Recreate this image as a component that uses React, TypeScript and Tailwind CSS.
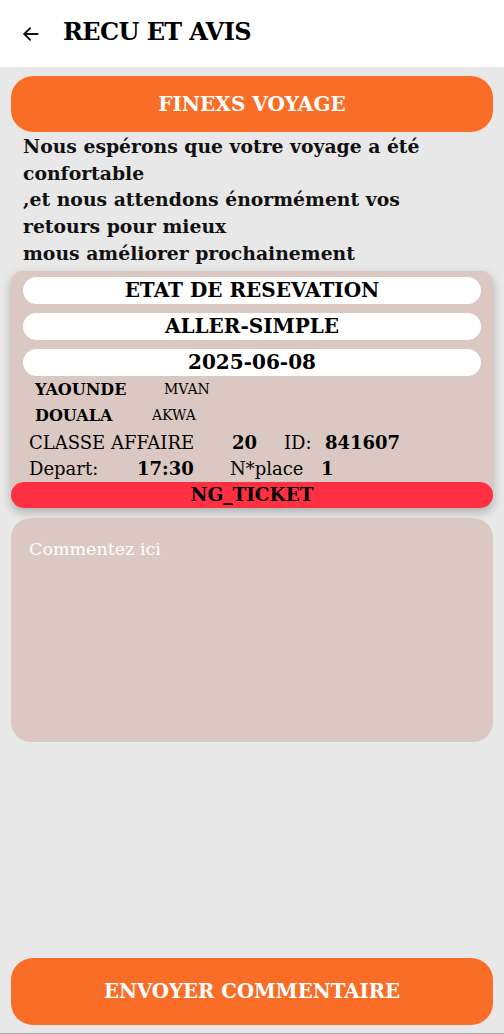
export default function App() {
  const serif = { fontFamily: '"DejaVu Serif", "Liberation Serif", serif' };
  return (
    <div className="flex h-[1034px] w-full flex-col bg-[#e8e8e8] text-black" style={serif}>
      <header className="flex h-[67px] items-center bg-white pl-[21px]">
        <svg width="20" height="20" viewBox="0 0 24 24" fill="none" stroke="#111" strokeWidth="2.2" strokeLinecap="round" strokeLinejoin="round">
          <path d="M20 12H4" />
          <path d="M11 5l-7 7 7 7" />
        </svg>
        <h1 className="mb-[3px] ml-[22px] text-[24px] font-bold tracking-[-0.6px]">RECU ET AVIS</h1>
      </header>

      <div className="flex flex-1 flex-col px-[11px] pt-[9px] pb-[8px]">
        <div className="flex h-[56px] items-center justify-center rounded-[22px] bg-[#fa6d27] text-[20px] font-bold text-white">
          FINEXS VOYAGE
        </div>

        <p className="px-[12px] pt-[1px] text-[18.8px] font-bold leading-[26.7px] text-[#111]">
          Nous espérons que votre voyage a été
          <br />
          confortable
          <br />
          ,et nous attendons énormément vos
          <br />
          retours pour mieux
          <br />
          mous améliorer prochainement
        </p>

        <div className="mt-[4px] rounded-[12px] bg-[#dcc8c2] pt-[6px] shadow-[0_4px_10px_rgba(0,0,0,0.25)]">
          <div className="flex flex-col gap-[9px] px-[12px]">
            {["ETAT DE RESEVATION", "ALLER-SIMPLE", "2025-06-08"].map((t) => (
              <div key={t} className="flex h-[27px] items-center justify-center rounded-full bg-white text-[20px] font-bold">
                {t}
              </div>
            ))}
          </div>
          <div className="px-[18px] pt-[1px]">
            <div className="flex h-[26px] items-center">
              <span className="ml-[6px] w-[129px] text-[16px] font-bold">YAOUNDE</span>
              <span className="text-[14px]">MVAN</span>
            </div>
            <div className="flex h-[26px] items-center">
              <span className="ml-[6px] w-[117px] text-[16px] font-bold">DOUALA</span>
              <span className="text-[14px]">AKWA</span>
            </div>
          </div>
          <div className="px-[18px] text-[18px]">
            <div className="flex h-[27px] items-center">
              <span className="w-[203px]">CLASSE AFFAIRE</span>
              <span className="w-[52px] font-bold">20</span>
              <span className="w-[41px]">ID:</span>
              <span className="font-bold">841607</span>
            </div>
            <div className="flex h-[26px] items-center">
              <span className="w-[108px]">Depart:</span>
              <span className="w-[93px] font-bold">17:30</span>
              <span className="w-[91px]">N*place</span>
              <span className="font-bold">1</span>
            </div>
          </div>
          <div className="flex h-[26px] items-center justify-center rounded-full bg-[#fe3042] text-[18.5px] font-bold">
            NG_TICKET
          </div>
        </div>

        <textarea
          placeholder="Commentez ici"
          className="mt-[10px] h-[224px] w-full resize-none rounded-[20px] bg-[#dcc8c2] px-[18px] py-[18px] text-[17.5px] text-white outline-none placeholder:text-white"
          style={serif}
        />

        <div className="flex-1" />

        <button className="flex h-[67px] w-full items-center justify-center rounded-[22px] bg-[#fa6d27] text-[19.7px] font-bold text-white" style={serif}>
          ENVOYER COMMENTAIRE
        </button>
      </div>
      <div className="h-[1px] bg-[#a8a8a8]" />
    </div>
  );
}
